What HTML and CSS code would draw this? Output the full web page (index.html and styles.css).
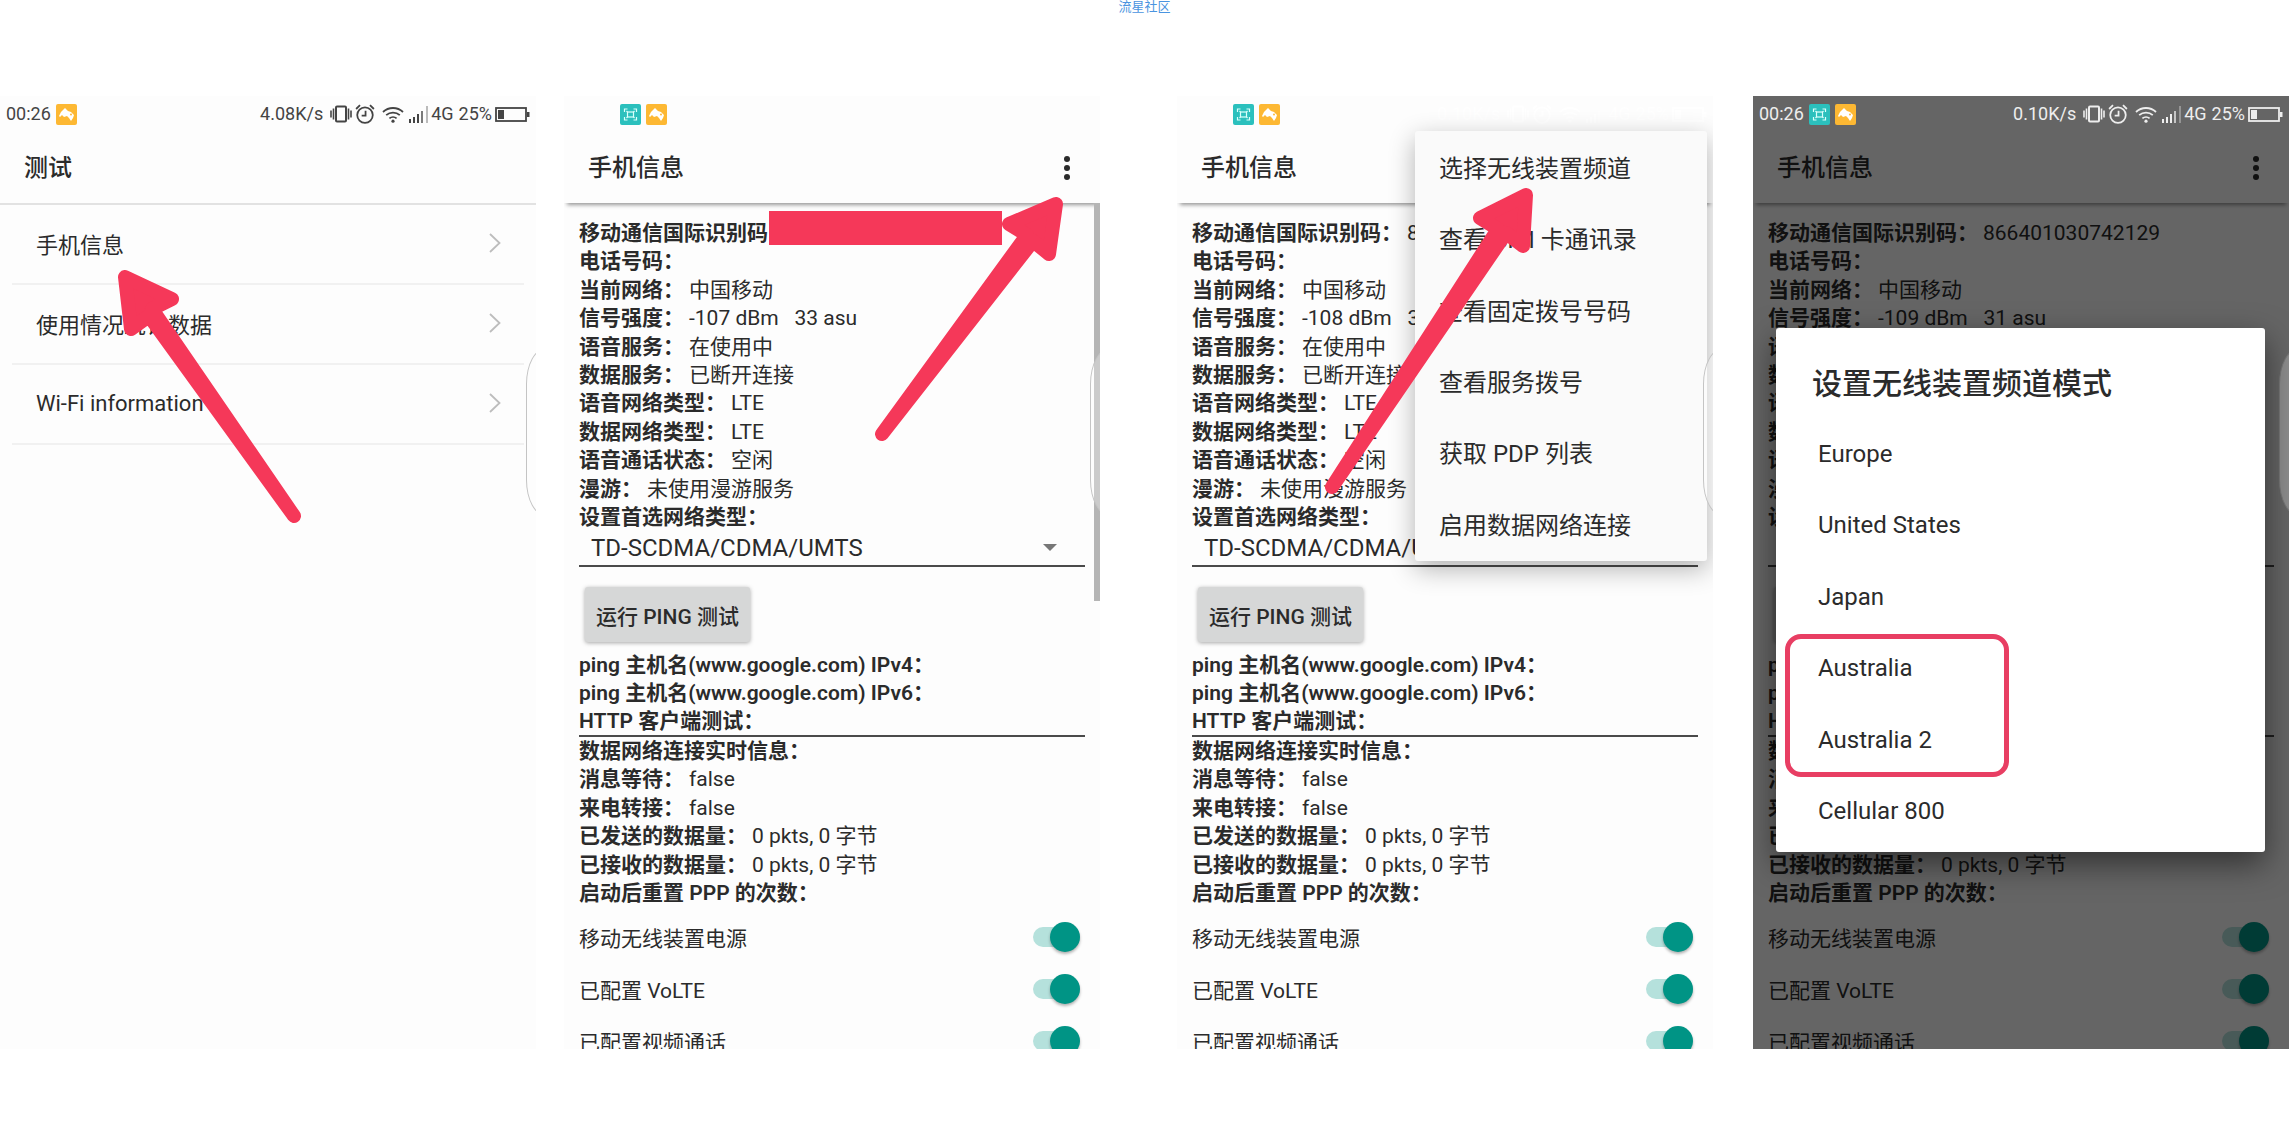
FILE: index.html
```html
<!DOCTYPE html>
<html lang="zh-CN">
<head>
<meta charset="utf-8">
<meta name="viewport" content="width=device-width, initial-scale=1">
<title>流星社区</title>
<link rel="stylesheet" href="styles.css">
</head>
<body>
<svg class="defs" aria-hidden="true">
  <defs>
    <symbol id="i-scan" viewBox="0 0 21 21">
      <rect width="21" height="21" rx="2" fill="#2bc0bd"/>
      <g fill="none" stroke="#d9fffb" stroke-width="1.2"><path d="M4.500 8V5h3M13.500 5h3v3M16.500 13v3h-3M7.500 16h-3v-3"/><rect x="7.500" y="8" width="6" height="5"/><path d="M6.500 7l1 1M14.500 7l-1 1M6.500 14l1-1M14.500 14l-1-1"/></g>
    </symbol>
    <symbol id="i-bird" viewBox="0 0 21 21">
      <rect width="21" height="21" rx="2" fill="#fdb833"/>
      <path d="M3 12l2-4 4-4 3 3 3 1 3 3-1 3-2 3-2-3-2-2-3 1-2-2-2 2z" fill="#fff"/>
      <circle cx="15" cy="10.500" r="1" fill="#fdb833"/>
    </symbol>
    <symbol id="i-vibrate" viewBox="0 0 22 18">
      <rect x="6" y="1.500" width="10" height="15" rx="1" fill="none" stroke="currentColor" stroke-width="2"/>
      <path d="M3.500 3.500v11M18.500 3.500v11M1 5.500v7M21 5.500v7" stroke="currentColor" stroke-width="1.600"/>
    </symbol>
    <symbol id="i-alarm" viewBox="0 0 18 18">
      <g fill="none" stroke="currentColor" stroke-width="1.600"><circle cx="9" cy="10" r="7"/><path d="M9.500 6v4.500H6M1 4.500L4.500 1M17 4.500L13.500 1"/></g>
    </symbol>
    <symbol id="i-wifi" viewBox="0 0 22 17">
      <g fill="none" stroke="currentColor" stroke-width="1.800"><path d="M1 6a14.500 14.500 0 0 1 20 0M4.200 9.200a10 10 0 0 1 13.600 0M7.400 12.400a5.500 5.500 0 0 1 7.200 0"/></g>
      <circle cx="11" cy="15.200" r="1.600" fill="currentColor"/>
    </symbol>
    <symbol id="i-signal" viewBox="0 0 20 17">
      <path d="M1 13v4M5 11v6M9 8v9" stroke="currentColor" stroke-width="2"/>
      <path d="M13 5v12" stroke="currentColor" stroke-width="2" opacity=".7"/>
      <path d="M18 0v17" stroke="currentColor" stroke-width="2" opacity=".35"/>
    </symbol>
    <symbol id="i-battery" viewBox="0 0 35 15">
      <rect x="1" y="1" width="30" height="13" fill="none" stroke="currentColor" stroke-width="1.800"/>
      <path d="M3 3h6v9H3zM32 5h2.500v5H32z" fill="currentColor"/>
    </symbol>
    <symbol id="i-more" viewBox="0 0 6 24">
      <g fill="currentColor"><circle cx="3" cy="3" r="3"/><circle cx="3" cy="12" r="3"/><circle cx="3" cy="21" r="3"/></g>
    </symbol>
    <symbol id="i-chevron" viewBox="0 0 12 20">
      <path d="M1 1l9.500 9L1 19" fill="none" stroke="#bdbdbd" stroke-width="1.800"/>
    </symbol>
  </defs>
</svg>

<header class="site"><a href="#">流星社区</a></header>

<main class="shots">

  <section class="phone phone-tests">
    <div class="status">
      <span class="clock">00:26</span>
      <svg class="app"><use href="#i-bird"/></svg>
      <span class="speed">4.08K/s</span>
      <svg class="vibrate"><use href="#i-vibrate"/></svg>
      <svg class="alarm"><use href="#i-alarm"/></svg>
      <svg class="wifi"><use href="#i-wifi"/></svg>
      <svg class="signal"><use href="#i-signal"/></svg>
      <span class="net">4G</span>
      <span>25%</span>
      <svg class="battery"><use href="#i-battery"/></svg>
    </div>
    <div class="bar bar-flat"><h2>测试</h2></div>
    <nav class="tests">
      <a href="#">手机信息<svg><use href="#i-chevron"/></svg></a>
      <a href="#">使用情况统计数据<svg><use href="#i-chevron"/></svg></a>
      <a href="#">Wi-Fi information<svg><use href="#i-chevron"/></svg></a>
    </nav>
    <div class="handle"></div>
    <svg class="marks" viewBox="0 0 536 952" aria-hidden="true"><path d="M125 181L172 203L152 213L294 420L149 220L131 233Z"/></svg>
  </section>

  <section class="phone phone-info">
    <div class="status">
      <span class="clock"></span>
      <svg class="app"><use href="#i-scan"/></svg>
      <svg class="app"><use href="#i-bird"/></svg>
    </div>
    <div class="bar"><h2>手机信息</h2><button class="more" type="button" aria-label="更多选项"><svg><use href="#i-more"/></svg></button></div>
    <div class="info">
      <dl class="facts facts-radio">
        <div><dt>移动通信国际识别码</dt></div>
        <div><dt>电话号码：</dt></div>
        <div><dt>当前网络：</dt><dd>中国移动</dd></div>
        <div><dt>信号强度：</dt><dd>-107 dBm   33 asu</dd></div>
        <div><dt>语音服务：</dt><dd>在使用中</dd></div>
        <div><dt>数据服务：</dt><dd>已断开连接</dd></div>
        <div><dt>语音网络类型：</dt><dd>LTE</dd></div>
        <div><dt>数据网络类型：</dt><dd>LTE</dd></div>
        <div><dt>语音通话状态：</dt><dd>空闲</dd></div>
        <div><dt>漫游：</dt><dd>未使用漫游服务</dd></div>
        <div><dt><label for="net-a">设置首选网络类型：</label></dt></div>
      </dl>
      <div class="spinner"><select id="net-a"><option>TD-SCDMA/CDMA/UMTS</option></select></div>
      <button class="ping" type="button">运行 PING 测试</button>
      <dl class="facts facts-ping">
        <div><dt>ping 主机名(www.google.com) IPv4：</dt></div>
        <div><dt>ping 主机名(www.google.com) IPv6：</dt></div>
        <div><dt>HTTP 客户端测试：</dt></div>
      </dl>
      <dl class="facts facts-data">
        <div><dt>数据网络连接实时信息：</dt></div>
        <div><dt>消息等待：</dt><dd>false</dd></div>
        <div><dt>来电转接：</dt><dd>false</dd></div>
        <div><dt>已发送的数据量：</dt><dd>0 pkts, 0 字节</dd></div>
        <div><dt>已接收的数据量：</dt><dd>0 pkts, 0 字节</dd></div>
        <div><dt>启动后重置 PPP 的次数：</dt></div>
      </dl>
      <label class="toggle">移动无线装置电源<input type="checkbox" checked></label>
      <label class="toggle">已配置 VoLTE<input type="checkbox" checked></label>
      <label class="toggle">已配置视频通话<input type="checkbox" checked></label>
    </div>
    <div class="scrollbar"></div>
    <div class="handle"></div>
    <svg class="marks" viewBox="0 0 536 952" aria-hidden="true"><rect class="redact" x="205" y="115" width="233" height="34"/><path d="M492 108L445 128L463 139L318 338L469 145L485 158Z"/></svg>
  </section>

  <section class="phone phone-menu">
    <div class="status">
      <span class="clock"></span>
      <svg class="app"><use href="#i-scan"/></svg>
      <svg class="app"><use href="#i-bird"/></svg>
      <span class="speed">0.10K/s</span>
      <svg class="vibrate"><use href="#i-vibrate"/></svg>
      <svg class="alarm"><use href="#i-alarm"/></svg>
      <svg class="wifi"><use href="#i-wifi"/></svg>
      <svg class="signal"><use href="#i-signal"/></svg>
      <span class="net">4G</span>
      <span>25%</span>
      <svg class="battery"><use href="#i-battery"/></svg>
    </div>
    <div class="bar"><h2>手机信息</h2></div>
    <div class="info">
      <dl class="facts facts-radio">
        <div><dt>移动通信国际识别码：</dt><dd>866401030742129</dd></div>
        <div><dt>电话号码：</dt></div>
        <div><dt>当前网络：</dt><dd>中国移动</dd></div>
        <div><dt>信号强度：</dt><dd>-108 dBm   32 asu</dd></div>
        <div><dt>语音服务：</dt><dd>在使用中</dd></div>
        <div><dt>数据服务：</dt><dd>已断开连接</dd></div>
        <div><dt>语音网络类型：</dt><dd>LTE</dd></div>
        <div><dt>数据网络类型：</dt><dd>LTE</dd></div>
        <div><dt>语音通话状态：</dt><dd>空闲</dd></div>
        <div><dt>漫游：</dt><dd>未使用漫游服务</dd></div>
        <div><dt><label for="net-b">设置首选网络类型：</label></dt></div>
      </dl>
      <div class="spinner"><select id="net-b"><option>TD-SCDMA/CDMA/UMTS</option></select></div>
      <button class="ping" type="button">运行 PING 测试</button>
      <dl class="facts facts-ping">
        <div><dt>ping 主机名(www.google.com) IPv4：</dt></div>
        <div><dt>ping 主机名(www.google.com) IPv6：</dt></div>
        <div><dt>HTTP 客户端测试：</dt></div>
      </dl>
      <dl class="facts facts-data">
        <div><dt>数据网络连接实时信息：</dt></div>
        <div><dt>消息等待：</dt><dd>false</dd></div>
        <div><dt>来电转接：</dt><dd>false</dd></div>
        <div><dt>已发送的数据量：</dt><dd>0 pkts, 0 字节</dd></div>
        <div><dt>已接收的数据量：</dt><dd>0 pkts, 0 字节</dd></div>
        <div><dt>启动后重置 PPP 的次数：</dt></div>
      </dl>
      <label class="toggle">移动无线装置电源<input type="checkbox" checked></label>
      <label class="toggle">已配置 VoLTE<input type="checkbox" checked></label>
      <label class="toggle">已配置视频通话<input type="checkbox" checked></label>
    </div>
    <div class="menu">
      <button type="button">选择无线装置频道</button>
      <button type="button">查看 SIM 卡通讯录</button>
      <button type="button">查看固定拨号号码</button>
      <button type="button">查看服务拨号</button>
      <button type="button">获取 PDP 列表</button>
      <button type="button">启用数据网络连接</button>
    </div>
    <div class="handle"></div>
    <svg class="marks" viewBox="0 0 536 952" aria-hidden="true"><path d="M349 99L303 122L321 133L155 391L329 137L346 150Z"/></svg>
  </section>

  <section class="phone phone-band">
    <div class="status">
      <span class="clock">00:26</span>
      <svg class="app"><use href="#i-scan"/></svg>
      <svg class="app"><use href="#i-bird"/></svg>
      <span class="speed">0.10K/s</span>
      <svg class="vibrate"><use href="#i-vibrate"/></svg>
      <svg class="alarm"><use href="#i-alarm"/></svg>
      <svg class="wifi"><use href="#i-wifi"/></svg>
      <svg class="signal"><use href="#i-signal"/></svg>
      <span class="net">4G</span>
      <span>25%</span>
      <svg class="battery"><use href="#i-battery"/></svg>
    </div>
    <div class="bar"><h2>手机信息</h2><button class="more" type="button" aria-label="更多选项"><svg><use href="#i-more"/></svg></button></div>
    <div class="info">
      <dl class="facts facts-radio">
        <div><dt>移动通信国际识别码：</dt><dd>866401030742129</dd></div>
        <div><dt>电话号码：</dt></div>
        <div><dt>当前网络：</dt><dd>中国移动</dd></div>
        <div><dt>信号强度：</dt><dd>-109 dBm   31 asu</dd></div>
        <div><dt>语音服务：</dt><dd>在使用中</dd></div>
        <div><dt>数据服务：</dt><dd>已断开连接</dd></div>
        <div><dt>语音网络类型：</dt><dd>LTE</dd></div>
        <div><dt>数据网络类型：</dt><dd>LTE</dd></div>
        <div><dt>语音通话状态：</dt><dd>空闲</dd></div>
        <div><dt>漫游：</dt><dd>未使用漫游服务</dd></div>
        <div><dt><label for="net-c">设置首选网络类型：</label></dt></div>
      </dl>
      <div class="spinner"><select id="net-c"><option>TD-SCDMA/CDMA/UMTS</option></select></div>
      <button class="ping" type="button">运行 PING 测试</button>
      <dl class="facts facts-ping">
        <div><dt>ping 主机名(www.google.com) IPv4：</dt></div>
        <div><dt>ping 主机名(www.google.com) IPv6：</dt></div>
        <div><dt>HTTP 客户端测试：</dt></div>
      </dl>
      <dl class="facts facts-data">
        <div><dt>数据网络连接实时信息：</dt></div>
        <div><dt>消息等待：</dt><dd>false</dd></div>
        <div><dt>来电转接：</dt><dd>false</dd></div>
        <div><dt>已发送的数据量：</dt><dd>0 pkts, 0 字节</dd></div>
        <div><dt>已接收的数据量：</dt><dd>0 pkts, 0 字节</dd></div>
        <div><dt>启动后重置 PPP 的次数：</dt></div>
      </dl>
      <label class="toggle">移动无线装置电源<input type="checkbox" checked></label>
      <label class="toggle">已配置 VoLTE<input type="checkbox" checked></label>
      <label class="toggle">已配置视频通话<input type="checkbox" checked></label>
    </div>
    <div class="scrim"></div>
    <div class="handle"></div>
    <div class="dialog" role="dialog" aria-labelledby="band-title">
      <h3 id="band-title">设置无线装置频道模式</h3>
      <div class="bands">
        <button type="button">Europe</button>
        <button type="button">United States</button>
        <button type="button">Japan</button>
        <button type="button">Australia</button>
        <button type="button">Australia 2</button>
        <button type="button">Cellular 800</button>
      </div>
      <div class="ring"></div>
    </div>
  </section>

</main>
</body>
</html>
```
FILE: styles.css
```css
* { box-sizing: border-box; }

body {
  margin: 0;
  height: 100vh;
  display: flex;
  flex-direction: column;
  background: #fff;
  color: #2b2b2b;
  font-family: Roboto, "Noto Sans CJK SC", sans-serif;
  font-size: 21px;
}

h2, h3, dl, dd { margin: 0; font-weight: 400; }
a { color: inherit; text-decoration: none; }
button, select { border: 0; padding: 0; background: none; font: inherit; color: inherit; text-align: left; }
.defs { position: absolute; width: 0; height: 0; }

.site {
  height: 96px;
  flex: none;
  text-align: center;
  font-size: 13px;
  line-height: 13px;
  color: #4a94e0;
}

.shots {
  flex: 1;
  min-height: 0;
  display: flex;
  padding-bottom: 96px;
}

.phone {
  position: relative;
  flex: 1;
  min-width: 0;
  overflow: hidden;
  background: #fdfdfd;
}
.phone-info { margin-left: 28px; }
.phone-menu { margin-left: 77px; }
.phone-band { margin-left: 40px; }

/* status bar */
.status {
  display: flex;
  align-items: center;
  height: 36px;
  padding: 0 6px;
  font-size: 18px;
  line-height: 36px;
  color: #444;
}
.status svg { flex: none; }
.clock { width: 50px; }
.app { width: 21px; height: 21px; margin-right: 5px; }
.speed { margin-left: auto; margin-right: 7px; }
.vibrate { width: 22px; height: 18px; margin-right: 3px; }
.alarm { width: 20px; height: 20px; margin-right: 7px; }
.wifi { width: 22px; height: 17px; margin-right: 5px; }
.signal { width: 20px; height: 17px; margin-right: 2px; }
.net { margin-right: 5px; }
.battery { width: 35px; height: 15px; margin-left: 3px; }
.phone-menu .status { color: #fff; }

/* title bar */
.bar {
  position: relative;
  display: flex;
  align-items: center;
  justify-content: space-between;
  height: 71px;
  padding: 0 30px 0 24px;
  box-shadow: 0 5px 4px -3px rgba(0, 0, 0, .4);
}
.bar-flat { box-shadow: none; border-bottom: 2px solid #e2e2e2; height: 73px; }
.bar h2 { font-size: 24px; line-height: 36px; font-weight: 500; }
.more { width: 6px; height: 24px; }
.more svg { display: block; width: 6px; height: 24px; }

/* test list */
.tests { padding: 0 12px; }
.tests a {
  display: flex;
  align-items: center;
  justify-content: space-between;
  height: 80px;
  padding: 0 23px 2px 24px;
  border-bottom: 2px solid #f1f1f1;
  font-size: 22px;
}
.tests svg { width: 12px; height: 20px; }

/* phone info */
.info { padding: 16px 15px 0; }
.facts { display: grid; align-content: space-between; }
.facts div { display: flex; height: 28px; line-height: 28px; white-space: pre; }
.facts dt { font-weight: 600; }
.facts dd { margin-left: 5px; }
.facts-radio { min-height: 312px; }
.facts-ping { min-height: 86px; border-bottom: 2px solid #4a4a4a; }
.facts-data { min-height: 170px; }

.spinner {
  position: relative;
  height: 36px;
  border-bottom: 2px solid #4a4a4a;
}
.spinner select {
  display: block;
  width: 100%;
  height: 34px;
  padding-left: 12px;
  appearance: none;
  font-size: 24px;
}
.spinner::after {
  content: "";
  position: absolute;
  right: 28px;
  top: 13px;
  border: 7px solid transparent;
  border-top-color: #777;
  border-bottom: 0;
}

.ping {
  display: block;
  width: 165px;
  height: 55px;
  margin: 20px 6px 9px;
  border-radius: 3px;
  background: #d6d7d7;
  box-shadow: 0 1px 4px rgba(0, 0, 0, .35);
  text-align: center;
  font-weight: 500;
}

.toggle {
  display: flex;
  align-items: center;
  justify-content: space-between;
  height: 52px;
  padding-right: 5px;
}
.facts-data + .toggle { margin-top: 4px; }
.toggle input {
  position: relative;
  appearance: none;
  width: 47px;
  height: 20px;
  margin: 0;
  border-radius: 10px;
  background: #b5e1dc;
}
.toggle input::before {
  content: "";
  position: absolute;
  right: 0;
  top: -5px;
  width: 30px;
  height: 30px;
  border-radius: 50%;
  background: #009485;
  box-shadow: 0 2px 3px rgba(0, 0, 0, .3);
}

/* things lying over the screens */
.scrollbar {
  position: absolute;
  right: 0;
  top: 107px;
  width: 6px;
  height: 398px;
  background: #b5b5b5;
}
.handle {
  position: absolute;
  right: -30px;
  top: 252px;
  width: 40px;
  height: 168px;
  border: 1px solid #c4c4c4;
  border-radius: 20px / 36px;
  background: rgba(255, 255, 255, .3);
}
.marks {
  position: absolute;
  left: 0;
  top: 0;
  width: 536px;
  height: 952px;
  fill: #f53859;
  stroke: #f53859;
  stroke-width: 14px;
  stroke-linejoin: round;
}
.redact { stroke: none; }

.menu {
  position: absolute;
  right: 6px;
  top: 35px;
  width: 292px;
  min-height: 430px;
  display: grid;
  padding-bottom: 2px;
  border-radius: 3px;
  background: #fafafa;
  box-shadow: 0 8px 26px rgba(0, 0, 0, .3);
}
.menu button { padding-left: 24px; font-size: 24px; }

.scrim { position: absolute; inset: 0; background: rgba(0, 0, 0, .6); }
.phone-band .status { position: relative; z-index: 1; color: #eee; }
.phone-band .handle { border-color: #777; background: #8c8c8c; }

.dialog {
  position: absolute;
  left: 23px;
  right: 24px;
  top: 232px;
  padding: 33px 0 5px;
  border-radius: 3px;
  background: #fff;
  box-shadow: 0 12px 32px rgba(0, 0, 0, .5);
}
.dialog h3 { padding-left: 36px; margin-bottom: 12px; font-size: 30px; line-height: 45px; font-weight: 500; }
.bands { display: grid; min-height: 429px; }
.bands button { padding-left: 42px; font-size: 24px; }
.ring {
  position: absolute;
  left: 9px;
  top: 306px;
  width: 224px;
  height: 143px;
  border: 5px solid #e83e63;
  border-radius: 16px;
}
```
